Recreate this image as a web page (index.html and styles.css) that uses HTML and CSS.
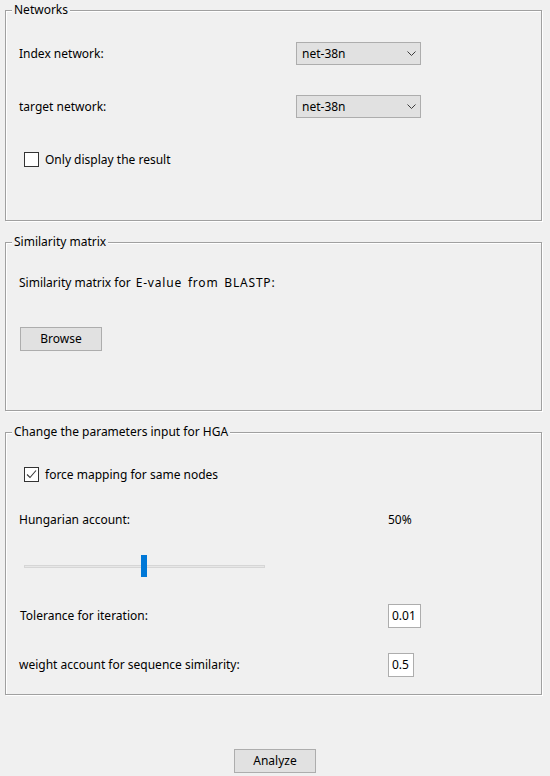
FILE: index.html
```html
<!DOCTYPE html>
<html>
<head>
<meta charset="utf-8">
<link rel="stylesheet" href="styles.css">
</head>
<body>
<div class="page">
  <section class="group group-networks">
    <span class="group-title">Networks</span>
    <div class="field-row first">
      <span class="label">Index network:</span>
      <div class="combo"><span>net-38n</span><svg class="chev" width="9" height="5" viewBox="0 0 9 5"><polyline points="0.5,0.5 4.5,4.5 8.5,0.5" fill="none" stroke="#3c3c3c" stroke-width="1"/></svg></div>
    </div>
    <div class="field-row second">
      <span class="label">target network:</span>
      <div class="combo"><span>net-38n</span><svg class="chev" width="9" height="5" viewBox="0 0 9 5"><polyline points="0.5,0.5 4.5,4.5 8.5,0.5" fill="none" stroke="#3c3c3c" stroke-width="1"/></svg></div>
    </div>
    <label class="check-row">
      <span class="checkbox"></span>
      <span class="label">Only display the result</span>
    </label>
  </section>

  <section class="group group-matrix">
    <span class="group-title">Similarity matrix</span>
    <div class="matrix-label label">Similarity matrix for <span class="wide">E-value from BLASTP:</span></div>
    <button class="btn browse">Browse</button>
  </section>

  <section class="group group-hga">
    <span class="group-title">Change the parameters input for HGA</span>
    <label class="check-row">
      <span class="checkbox"><svg width="13" height="13" viewBox="0 0 13 13"><polyline points="2,6.5 5,9.5 11,2.5" fill="none" stroke="#3a3a3a" stroke-width="1.1"/></svg></span>
      <span class="label">force mapping for same nodes</span>
    </label>
    <div class="param-row hung">
      <span class="label">Hungarian account:</span>
      <span class="label">50%</span>
    </div>
    <div class="slider">
      <div class="track"></div>
      <div class="thumb" style="left:50%"></div>
    </div>
    <div class="param-row tol">
      <span class="label">Tolerance for iteration:</span>
      <span class="textbox w33">0.01</span>
    </div>
    <div class="param-row weight">
      <span class="label">weight account for sequence similarity:</span>
      <span class="textbox w26">0.5</span>
    </div>
  </section>

  <button class="btn analyze">Analyze</button>
</div>
</body>
</html>
```

FILE: styles.css
```css
html, body {
  margin: 0;
  padding: 0;
  background: #f0f0f0;
}
body {
  width: 550px;
  height: 776px;
  overflow: hidden;
  font-family: "Noto Sans", "Open Sans", sans-serif;
  font-size: 12px;
  line-height: 16px;
  color: #000;
}
.page {
  display: flex;
  flex-direction: column;
  padding-top: 10px;
}
.group {
  position: relative;
  box-sizing: border-box;
  width: 537px;
  margin-left: 5px;
  border: 1px solid #a0a0a0;
  box-shadow: inset 1px 1px 0 #fff, 1px 1px 0 #fff;
}
.group-networks { height: 211px; }
.group-matrix { height: 169px; margin-top: 21px; }
.group-hga { height: 263px; margin-top: 21px; }

.group-title {
  position: absolute;
  top: -9px;
  left: 6px;
  padding: 0 2px;
  background: #f0f0f0;
  white-space: nowrap;
}
.label { white-space: nowrap; }

.field-row {
  display: grid;
  grid-template-columns: 277px 125px;
  align-items: center;
  height: 23px;
  padding-left: 13px;
}
.field-row.first { margin-top: 31px; }
.field-row.second { margin-top: 30px; }

.combo {
  box-sizing: border-box;
  height: 23px;
  display: flex;
  align-items: center;
  justify-content: space-between;
  padding: 0 4px 0 5px;
  background: #e1e1e1;
  border: 1px solid #adadad;
}
.chev { display: block; }

.check-row {
  display: flex;
  align-items: center;
  gap: 6px;
  height: 15px;
  margin-top: 34px;
  padding-left: 18px;
}
.checkbox {
  box-sizing: border-box;
  width: 15px;
  height: 15px;
  border: 1px solid #333;
  background: #fff;
  display: flex;
}
.checkbox svg { display: block; }

.matrix-label {
  margin-top: 32px;
  padding-left: 13px;
}
.wide {
  margin-left: 2px;
  letter-spacing: 0.8px;
  word-spacing: 2px;
}
.btn {
  box-sizing: border-box;
  width: 82px;
  height: 24px;
  padding: 0;
  background: #e1e1e1;
  border: 1px solid #adadad;
  font: inherit;
  color: #000;
}
.browse {
  display: block;
  margin: 36px 0 0 14px;
}
.analyze {
  display: block;
  margin: 54px auto 0;
}

.param-row {
  display: grid;
  grid-template-columns: 369px auto;
  align-items: center;
  padding-left: 13px;
}
.param-row.hung { margin-top: 30px; height: 16px; }
.param-row.tol { margin-top: 27px; height: 24px; padding-left: 14px; grid-template-columns: 368px auto; }
.param-row.weight { margin-top: 25px; height: 24px; }

.slider {
  position: relative;
  width: 241px;
  height: 22px;
  margin: 27px 0 0 18px;
  display: flex;
  align-items: center;
}
.track {
  box-sizing: border-box;
  width: 100%;
  height: 3px;
  background: #e7e7e7;
  border: 1px solid #d6d6d6;
}
.thumb {
  position: absolute;
  top: 0;
  width: 6px;
  height: 22px;
  margin-left: -4px;
  background: #0078d7;
}

.textbox {
  box-sizing: border-box;
  height: 24px;
  display: flex;
  align-items: center;
  padding-left: 3px;
  background: #fff;
  border: 1px solid #adadad;
}
.w33 { width: 33px; }
.w26 { width: 26px; }
```
